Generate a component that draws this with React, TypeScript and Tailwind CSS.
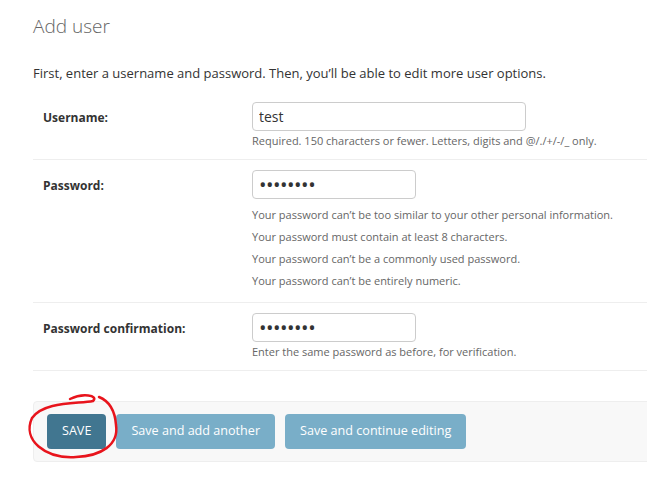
import React from "react";

const font = { fontFamily: '"Segoe UI", "Open Sans", "Noto Sans", sans-serif' };

function Row({
  label,
  children,
}: {
  label: string;
  children: React.ReactNode;
}) {
  return (
    <div className="flex border-b border-[#eee] py-[10px] pl-[10px]">
      <label className="w-[209px] shrink-0 pt-[7px] text-[12px] font-bold text-[#333]">
        {label}
      </label>
      <div className="flex flex-col">{children}</div>
    </div>
  );
}

const pw =
  "h-[29px] w-[164px] rounded-[4px] border border-[#ccc] px-[6px] text-[20px] tracking-[-0.5px] text-[#333] outline-none";

export default function App() {
  return (
    <div
      className="relative h-[490px] w-[647px] overflow-hidden bg-white text-[#333]"
      style={font}
    >
      <div className="w-[720px] pl-[33px] pt-[12px]">
        <h1 className="text-[19px] font-light leading-[28px] text-[#666]">Add user</h1>
        <p className="mt-[23px] text-[13px] leading-[20px] text-[#333]">
          First, enter a username and password. Then, you’ll be able to edit more user options.
        </p>
        <div className="mt-[9px]">
          <Row label="Username:">
            <input
              readOnly
              value="test"
              className="h-[29px] w-[274px] rounded-[4px] border border-[#ccc] px-[6px] text-[14px] text-[#333] outline-none"
            />
            <p className="mt-[2px] text-[11px] leading-[16px] text-[#666]">
              Required. 150 characters or fewer. Letters, digits and @/./+/-/_ only.
            </p>
          </Row>
          <Row label="Password:">
            <input readOnly type="password" value="12345678" className={pw} />
            <ul className="mt-[5px] text-[11px] leading-[22px] text-[#666]">
              <li>Your password can’t be too similar to your other personal information.</li>
              <li>Your password must contain at least 8 characters.</li>
              <li>Your password can’t be a commonly used password.</li>
              <li>Your password can’t be entirely numeric.</li>
            </ul>
          </Row>
          <Row label="Password confirmation:">
            <input readOnly type="password" value="12345678" className={pw} />
            <p className="mt-[2px] text-[11px] leading-[16px] text-[#666]">
              Enter the same password as before, for verification.
            </p>
          </Row>
        </div>
        <div className="mt-[30px] flex gap-[10px] rounded-[4px] border border-[#eee] bg-[#f8f8f8] px-[13px] py-[12px]">
          <button className="h-[35px] rounded-[4px] bg-[#417690] px-[15px] text-[12.6px] uppercase text-white">
            Save
          </button>
          <button className="h-[35px] rounded-[4px] bg-[#79aec8] px-[15px] text-[12.6px] text-white">
            Save and add another
          </button>
          <button className="h-[35px] rounded-[4px] bg-[#79aec8] px-[15px] text-[12.6px] text-white">
            Save and continue editing
          </button>
        </div>
      </div>
      <svg
        className="pointer-events-none absolute left-0 top-0"
        width="647"
        height="490"
        viewBox="0 0 647 490"
      >
        <path
          d="M70 399 C 82 393, 99 395, 93 401 C 78 404, 44 401, 32 418 C 22 440, 45 459, 76 457 C 101 456, 119 445, 116 425 C 115 411, 109 401, 99 397"
          fill="none"
          stroke="#e8141c"
          strokeWidth="2.5"
          strokeLinecap="round"
        />
      </svg>
    </div>
  );
}
